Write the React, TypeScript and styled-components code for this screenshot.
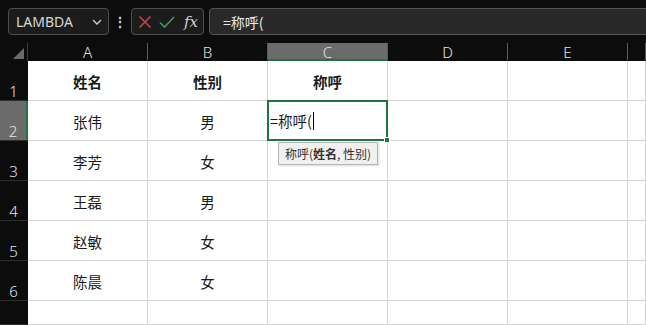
import React from "react";
import styled, { createGlobalStyle, css } from "styled-components";

const Global = createGlobalStyle`
  html, body { margin: 0; padding: 0; background: #0c0c0c; overflow: hidden; }
  * { box-sizing: border-box; }
`;

const Shell = styled.div`
  width: 646px;
  height: 325px;
  display: flex;
  flex-direction: column;
  background: #0c0c0c;
  font-family: "Noto Sans", "Noto Sans CJK SC", sans-serif;
  overflow: hidden;
`;

const Toolbar = styled.div`
  height: 43px;
  display: flex;
  align-items: flex-start;
  padding: 8px 0 0 8px;
`;

const NameBox = styled.div`
  width: 101px;
  height: 27px;
  border: 1px solid #4e4e4e;
  border-radius: 4px;
  background: #1c1c1c;
  display: flex;
  align-items: center;
  justify-content: space-between;
  padding: 0 6px 0 7px;
  color: #d6d6d6;
  font-size: 14px;
`;

const Dots = styled.div`
  width: 22px;
  height: 27px;
  display: flex;
  align-items: center;
  justify-content: center;
  color: #cfcfcf;
  font-size: 14px;
  font-weight: bold;
`;

const FxBox = styled.div`
  width: 73px;
  height: 27px;
  border: 1px solid #4e4e4e;
  border-radius: 4px;
  background: #1c1c1c;
  display: flex;
  align-items: center;
  padding: 0 4px 0 6px;
  gap: 7px;
`;

const FxLabel = styled.span`
  font-family: "DejaVu Serif", "Liberation Serif", serif;
  font-style: italic;
  color: #d0d0d0;
  font-size: 15px;
  margin-left: 2px;
`;

const Formula = styled.div`
  flex: 1;
  height: 27px;
  margin-left: 5px;
  margin-right: -10px;
  border: 1px solid #555;
  border-radius: 4px;
  background: #292929;
  display: flex;
  align-items: center;
  padding-left: 13px;
  color: #e8e8e8;
  font-family: "Noto Sans CJK SC", sans-serif;
  font-size: 14px;
`;

const Grid = styled.div`
  flex: 1;
  display: grid;
  grid-template-columns: 28px repeat(5, 120px) 1fr;
  grid-template-rows: 18px repeat(6, 40px) 1fr;
`;

const Corner = styled.div`
  background: #0c0c0c;
  border-right: 1px solid #3a3a3a;
  position: relative;
`;

const Triangle = styled.div`
  position: absolute;
  right: 3px;
  bottom: 2px;
  width: 0;
  height: 0;
  border-left: 11px solid transparent;
  border-bottom: 11px solid #6a6a6a;
`;

const ColHead = styled.div<{ $active?: boolean }>`
  background: ${(p) => (p.$active ? "#6b6b6b" : "#0c0c0c")};
  border-right: 1px solid #5a5a5a;
  border-bottom: ${(p) => (p.$active ? "2px solid #217346" : "1px solid #0c0c0c")};
  color: #e4e4e4;
  font-size: 15px;
  font-weight: 300;
  display: flex;
  align-items: center;
  justify-content: center;
  padding-top: 1px;
`;

const RowHead = styled.div<{ $active?: boolean }>`
  background: ${(p) => (p.$active ? "#6b6b6b" : "#0c0c0c")};
  border-bottom: 1px solid #2e2e2e;
  ${(p) =>
    p.$active
      ? css`border-right: 2px solid #217346;`
      : css`border-right: 1px solid #0c0c0c;`}
  color: #e4e4e4;
  font-size: 15px;
  font-weight: 300;
  display: flex;
  align-items: flex-end;
  justify-content: center;
  line-height: 18px;
`;

const Cell = styled.div<{ $bold?: boolean }>`
  background: #ffffff;
  border-right: 1px solid #d4d4d4;
  border-bottom: 1px solid #d4d4d4;
  display: flex;
  align-items: center;
  justify-content: center;
  font-family: "Noto Sans CJK SC", sans-serif;
  font-size: 14.5px;
  font-weight: ${(p) => (p.$bold ? 700 : 400)};
  color: #1a1a1a;
  position: relative;
  padding-top: 1px;
`;

const ActiveFrame = styled.div`
  position: absolute;
  left: -1px;
  top: -1px;
  right: -1px;
  bottom: -1px;
  border: 2px solid #217346;
  display: flex;
  align-items: center;
  padding-left: 1px;
  z-index: 2;
`;

const Handle = styled.div`
  position: absolute;
  right: -4px;
  bottom: -4px;
  width: 6px;
  height: 6px;
  background: #217346;
  border: 1px solid #fff;
`;

const Caret = styled.span`
  display: inline-block;
  width: 1px;
  height: 18px;
  background: #000;
  margin-left: 1px;
`;

const Tip = styled.div`
  position: absolute;
  left: 10px;
  top: 41px;
  height: 23px;
  padding: 0 6px;
  background: #f0f0f0;
  border: 1px solid #b5b5b5;
  box-shadow: 1px 1px 2px rgba(0, 0, 0, 0.15);
  font-family: "Noto Sans CJK SC", sans-serif;
  font-size: 12px;
  color: #333;
  display: flex;
  align-items: center;
  white-space: nowrap;
  z-index: 3;
`;

const cols = ["A", "B", "C", "D", "E", ""];
const data: string[][] = [
  ["姓名", "性别", "称呼"],
  ["张伟", "男", ""],
  ["李芳", "女", ""],
  ["王磊", "男", ""],
  ["赵敏", "女", ""],
  ["陈晨", "女", ""],
];

const XIcon = () => (
  <svg width="14" height="14" viewBox="0 0 14 14">
    <path d="M1.5 1.5 L12.5 12.5 M12.5 1.5 L1.5 12.5" stroke="#c0434a" strokeWidth="1.6" fill="none" />
  </svg>
);

const CheckIcon = () => (
  <svg width="16" height="14" viewBox="0 0 16 14">
    <path d="M1 7.5 L5.5 12 L15 2" stroke="#3f9a52" strokeWidth="1.6" fill="none" />
  </svg>
);

const Chevron = () => (
  <svg width="10" height="6" viewBox="0 0 10 6">
    <path d="M1 1 L5 5 L9 1" stroke="#cfcfcf" strokeWidth="1.3" fill="none" />
  </svg>
);

export default function App() {
  const rows = [];
  rows.push(
    <Corner key="corner">
      <Triangle />
    </Corner>
  );
  cols.forEach((c, i) =>
    rows.push(
      <ColHead key={"h" + i} $active={c === "C"}>
        {c}
      </ColHead>
    )
  );
  for (let r = 0; r < 7; r++) {
    rows.push(
      <RowHead key={"r" + r} $active={r === 1}>
        {r < 6 ? r + 1 : ""}
      </RowHead>
    );
    for (let c = 0; c < 6; c++) {
      const text = r < 6 ? data[r][c] ?? "" : "";
      const active = r === 1 && c === 2;
      rows.push(
        <Cell key={`c${r}-${c}`} $bold={r === 0}>
          {active ? (
            <>
              <ActiveFrame>
                =称呼(<Caret />
                <Handle />
              </ActiveFrame>
              <Tip>
                称呼(<b>姓名</b>, 性别)
              </Tip>
            </>
          ) : (
            text
          )}
        </Cell>
      );
    }
  }

  return (
    <Shell>
      <Global />
      <Toolbar>
        <NameBox>
          <span>LAMBDA</span>
          <Chevron />
        </NameBox>
        <Dots>⋮</Dots>
        <FxBox>
          <XIcon />
          <CheckIcon />
          <FxLabel>fx</FxLabel>
        </FxBox>
        <Formula>=称呼(</Formula>
      </Toolbar>
      <Grid>{rows}</Grid>
    </Shell>
  );
}
